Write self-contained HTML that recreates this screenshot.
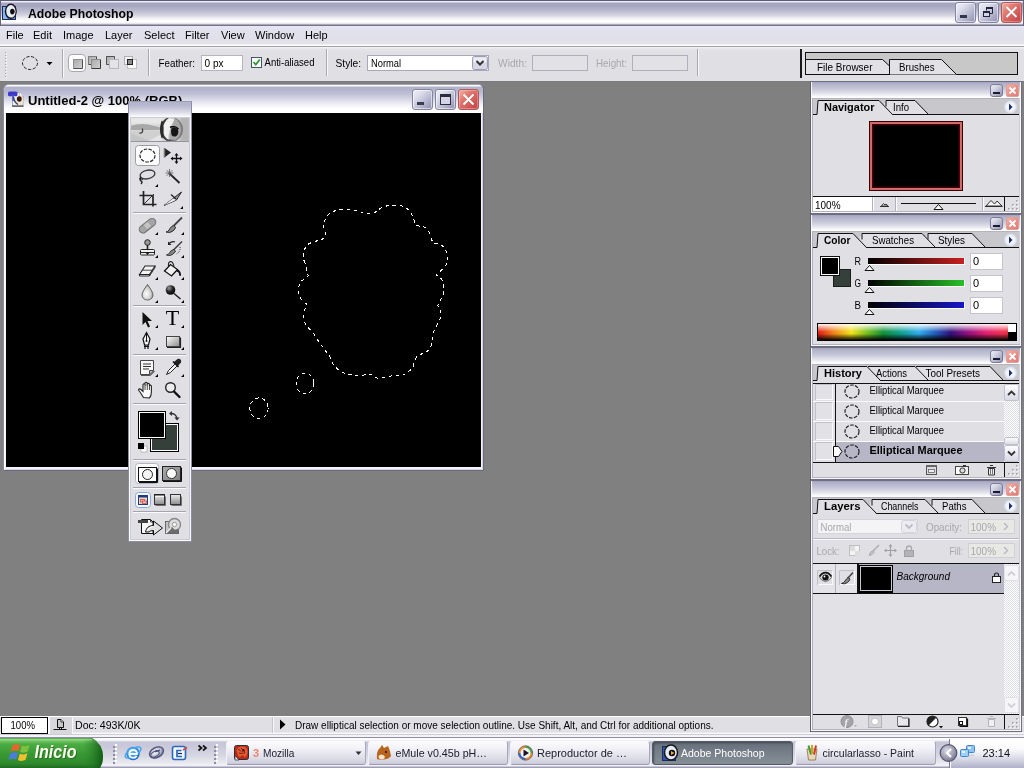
<!DOCTYPE html>
<html>
<head>
<meta charset="utf-8">
<title>Adobe Photoshop</title>
<style>
*{box-sizing:border-box;margin:0;padding:0}
html,body{width:1024px;height:768px;overflow:hidden;background:#808080}
body{position:relative;font-family:"Liberation Sans","DejaVu Sans",sans-serif;font-size:11px;color:#000;line-height:1}
.abs{position:absolute}
svg{position:absolute;overflow:visible;will-change:transform}
svg text{font-family:"Liberation Sans","DejaVu Sans",sans-serif}
.t{position:absolute;white-space:nowrap;will-change:transform}
/* main title bar */
#title{left:0;top:0;width:1024px;height:26px;background:linear-gradient(#5c5c74 0,#5c5c74 1px,#ececfa 1px,#ececfa 2px,#a4a4bc 3px,#aaaac2 7px,#bcbcd0 11px,#d2d2e0 15px,#eeeef4 18px,#ffffff 21px,#ffffff 22px,#dcdce4 24px,#74748a 25px,#74748a 26px)}
#title .t{left:28px;top:6px;font-size:13px;font-weight:bold;letter-spacing:0.2px}
#menu{left:0;top:26px;width:1024px;height:21px;background:linear-gradient(#e6e6f6 0,#e2e2ee 4px,#e0e0ea 14px,#e2e2e6 18px,#ffffff 19px,#ffffff 20px,#a0a0a8 20px,#a0a0a8 21px)}
#menu .t{top:4px;font-size:11px}
#opt{left:0;top:47px;width:1024px;height:34px;background:linear-gradient(#f6f6f8 0,#e4e3e8 2px,#e0dfe4 6px,#e0dfe4 30px,#e2e2e6 34px);box-shadow:0 1px 0 #7a7a7c}
.cap{background:linear-gradient(#9c9cb6 0,#b0b0c8 2px,#c6c6d8 6px,#e4e4ee 10px,#fbfbfd 13px,#fff 100%)}
.btn{border-radius:3px;border:1px solid #8484a0;background:linear-gradient(135deg,#f0f0fa 0,#dcdcec 30%,#b0b0ca 70%,#9090b0 100%);box-shadow:inset 0 0 0 1px rgba(255,255,255,.55)}
.btn.x{border-color:#b05858;background:linear-gradient(135deg,#f4b4a8 0,#e07870 35%,#cc5050 80%,#c04444 100%);box-shadow:inset 0 0 0 1px rgba(255,220,220,.35)}
.fld{background:#fff;border:1px solid #8e8f9e;border-right-color:#d8d8e0;border-bottom-color:#d8d8e0}
.sepv{width:2px;background:linear-gradient(90deg,#9c9ca4 0,#9c9ca4 1px,#fff 1px,#fff 2px)}
.seph{height:2px;background:linear-gradient(#9c9ca4 0,#9c9ca4 1px,#fff 1px,#fff 2px)}
</style>
</head>
<body>
<!-- ===== main title bar ===== -->
<div id="title" class="abs"></div>
<svg style="left:0;top:0" width="200" height="26" viewBox="0 0 200 26"><text x="28" y="17.500" font-size="13.500" font-weight="bold" textLength="105.500" lengthAdjust="spacingAndGlyphs">Adobe Photoshop</text>
<rect x="2.500" y="6.500" width="13" height="13" fill="#6c98d8" stroke="#1c2c58"/><rect x="3" y="7" width="4" height="12" fill="#88b4ec"/>
<ellipse cx="10.800" cy="11.300" rx="5.300" ry="7" fill="#e4f0f0" stroke="#14142c" stroke-width="1.500"/><path d="M10 5q5 1 5.500 6.500q0 5-4 6.500q3-6-1.500-13z" fill="#f4e8e8"/>
<ellipse cx="12.300" cy="11.600" rx="2.200" ry="2.800" fill="#0c0c14"/><path d="M11.500 9.500l3.500 2.200-3.500 2.200z" fill="#181010"/>
<rect x="0" y="1" width="1" height="25" fill="#64647e"/></svg>
<!-- main window buttons -->
<div class="abs btn" style="left:955px;top:2px;width:21px;height:21px"></div>
<div class="abs btn" style="left:978px;top:2px;width:21px;height:21px"></div>
<div class="abs btn x" style="left:1001px;top:2px;width:21px;height:21px"></div>
<svg style="left:955px;top:2px" width="69" height="24" viewBox="955 2 69 24">
 <rect x="960" y="15" width="7" height="3" fill="#34344c"/>
 <path d="M986.500 10.500v-3h6v6h-2.500" fill="none" stroke="#24243c" stroke-width="1"/><rect x="986" y="7" width="7" height="2" fill="#24243c"/>
 <rect x="983.500" y="11.500" width="6" height="5" fill="#d4d4e4" stroke="#24243c"/><rect x="983" y="11" width="7" height="2" fill="#24243c"/>
 <path d="M1006.500 7l10 10M1016.500 7l-10 10" stroke="#fff" stroke-width="1.900"/>
 <rect x="1023" y="1" width="1" height="25" fill="#64647e"/>
</svg>
<!-- ===== menu bar ===== -->
<div id="menu" class="abs">
<div class="t" style="left:6px">File</div>
<div class="t" style="left:33px">Edit</div>
<div class="t" style="left:63px">Image</div>
<div class="t" style="left:105px">Layer</div>
<div class="t" style="left:144px">Select</div>
<div class="t" style="left:185px">Filter</div>
<div class="t" style="left:221px">View</div>
<div class="t" style="left:255px">Window</div>
<div class="t" style="left:305px">Help</div>
</div>
<!-- ===== options bar ===== -->
<div id="opt" class="abs"></div>
<!-- options bar content -->
<svg class="abs" style="left:0;top:47px" width="1024" height="35" viewBox="0 47 1024 35">
 <!-- gripper -->
 <g fill="#a4a4b0"><rect x="5" y="52" width="1" height="1"/><rect x="5" y="55" width="1" height="1"/><rect x="5" y="58" width="1" height="1"/><rect x="5" y="61" width="1" height="1"/><rect x="5" y="64" width="1" height="1"/><rect x="5" y="67" width="1" height="1"/><rect x="5" y="70" width="1" height="1"/><rect x="5" y="73" width="1" height="1"/><rect x="5" y="76" width="1" height="1"/></g>
 <g fill="#fff"><rect x="6" y="53" width="1" height="1"/><rect x="6" y="56" width="1" height="1"/><rect x="6" y="59" width="1" height="1"/><rect x="6" y="62" width="1" height="1"/><rect x="6" y="65" width="1" height="1"/><rect x="6" y="68" width="1" height="1"/><rect x="6" y="71" width="1" height="1"/><rect x="6" y="74" width="1" height="1"/><rect x="6" y="77" width="1" height="1"/></g>
 <!-- ellipse marquee icon -->
 <ellipse cx="30" cy="63" rx="7.5" ry="6.5" fill="none" stroke="#222" stroke-width="1" stroke-dasharray="3.2 1.6"/>
 <path d="M46.5 62h6l-3 3.2z" fill="#000"/>
 <!-- mode buttons -->
 <linearGradient id="mbg" x1="0" y1="0" x2="1" y2="1"><stop offset="0" stop-color="#a8a8a8"/><stop offset="1" stop-color="#d4d4d4"/></linearGradient>
 <rect x="68.500" y="54.500" width="17" height="17" rx="3.500" fill="#fdfdfd" stroke="#a8a8b4"/>
 <rect x="73" y="59" width="10" height="10" fill="url(#mbg)"/><path d="M73.500 68.500h9v-9" fill="none" stroke="#505050"/><path d="M73.500 68v-8.500h8.500" fill="none" stroke="#909090"/>
 <rect x="88" y="56" width="9" height="9" fill="url(#mbg)"/><path d="M88.500 64.500h8v-8" fill="none" stroke="#484848"/><path d="M88.500 64v-7.500h7.500" fill="none" stroke="#7c7c7c"/>
 <rect x="91" y="59" width="10" height="10" fill="url(#mbg)"/><path d="M91.500 68.500h9v-9" fill="none" stroke="#383838"/><path d="M91.500 68v-8.500h8.500" fill="none" stroke="#8c8c8c"/>
 <rect x="106" y="56" width="9" height="9" fill="url(#mbg)"/><path d="M106.500 64.500v-8h8v8" fill="none" stroke="#505050"/><path d="M106.500 64.500h8" stroke="#505050"/>
 <rect x="109.500" y="59.500" width="9" height="9" fill="#e4e4e8" stroke="#b8b8bc"/>
 <rect x="124.500" y="56.500" width="8" height="8" fill="#f4f4f4" stroke="#b0b0b4"/>
 <rect x="127.500" y="59.500" width="9" height="9" fill="#fafafa" stroke="#c0c0c4"/>
 <rect x="127.500" y="59.500" width="5" height="5" fill="#8c8c8c" stroke="#222"/>
 <!-- separators -->
 <rect x="62" y="49" width="1" height="29" fill="#a8a8b0"/><rect x="63" y="49" width="1" height="29" fill="#f8f8fa"/>
 <rect x="148" y="49" width="1" height="27" fill="#a8a8b0"/><rect x="149" y="49" width="1" height="27" fill="#f8f8fa"/>
 <rect x="326" y="49" width="1" height="27" fill="#a8a8b0"/><rect x="327" y="49" width="1" height="27" fill="#f8f8fa"/>
 <rect x="697" y="49" width="1" height="27" fill="#a8a8b0"/><rect x="698" y="49" width="1" height="27" fill="#f8f8fa"/>
 <!-- feather -->
 <text x="158.500" y="67" font-size="11" textLength="36.5" lengthAdjust="spacingAndGlyphs">Feather:</text>
 <rect x="201.500" y="55.500" width="41" height="15" fill="#fff" stroke="#b4b4c4"/>
 <text x="204.500" y="67" font-size="11" textLength="19" lengthAdjust="spacingAndGlyphs">0 px</text>
 <!-- anti-aliased -->
 <rect x="251.500" y="57.500" width="10" height="10" fill="#fff" stroke="#44546c"/>
 <path d="M253.500 62l2.300 2.500 4-5" fill="none" stroke="#2a9a2a" stroke-width="1.800"/>
 <text x="264.500" y="66" font-size="11" textLength="50" lengthAdjust="spacingAndGlyphs">Anti-aliased</text>
 <!-- style -->
 <text x="335.500" y="67" font-size="11" textLength="25.5" lengthAdjust="spacingAndGlyphs">Style:</text>
 <rect x="367.500" y="55.500" width="121" height="15" fill="#fff" stroke="#a8a8bc"/>
 <text x="371" y="67" font-size="11" textLength="30" lengthAdjust="spacingAndGlyphs">Normal</text>
 <rect x="472.500" y="56.500" width="15" height="13" rx="2" fill="#d8d8e4" stroke="#9c9cb4"/>
 <rect x="473.500" y="57.500" width="13" height="5" fill="#f0f0f8" opacity=".8"/>
 <path d="M476.500 61l3.500 3.500 3.500-3.500" fill="none" stroke="#333" stroke-width="2"/>
 <!-- width/height (disabled) -->
 <text x="498" y="67" font-size="11" textLength="29" lengthAdjust="spacingAndGlyphs" fill="#a8a8ac">Width:</text>
 <rect x="532.500" y="55.500" width="55" height="15" fill="#e2e1e6" stroke="#b0b0bc"/>
 <text x="596" y="67" font-size="11" textLength="31" lengthAdjust="spacingAndGlyphs" fill="#a8a8ac">Height:</text>
 <rect x="632.500" y="55.500" width="55" height="15" fill="#e2e1e6" stroke="#b0b0bc"/>
 <!-- palette well -->
 <rect x="800" y="49" width="2" height="29" fill="#1a1a1a"/>
 <rect x="805.500" y="52.500" width="212" height="22" fill="#c8c8c8" stroke="#111"/>
 <path d="M806 59.500h76.500l7 6.500v8h-83.500z" fill="#e2e1e6"/>
 <path d="M806 59.500h76.500l7 6.500" fill="none" stroke="#111"/>
 <path d="M889.500 59.500v15" stroke="#111"/>
 <path d="M890 59.500h51.500l15 15h-66.500z" fill="#e2e1e6"/>
 <path d="M889.500 59.500h52l15 15" fill="none" stroke="#111"/>
 <text x="817" y="70.500" font-size="11" textLength="55.5" lengthAdjust="spacingAndGlyphs">File Browser</text>
 <text x="899" y="70.500" font-size="11" textLength="35.5" lengthAdjust="spacingAndGlyphs">Brushes</text>
</svg>
<!--OPTIONS-END-->
<!-- document window -->
<div class="abs" id="doc" style="left:3px;top:84px;width:481px;height:387px;border-radius:6px 6px 0 0;background:#f4f4fa;border:1px solid #8c8ca6;border-top-color:#a0a0b8;border-right-color:#6a6a7e;border-bottom-color:#6a6a7e;box-shadow:inset 1px 0 0 #fff,inset -1px 0 0 #d4d4e4,inset 0 -1px 0 #d4d4e4"></div>
<div class="abs" style="left:4px;top:85px;width:479px;height:28px;border-radius:5px 5px 0 0;background:linear-gradient(#fdfdff 0,#fdfdff 1px,#b2b2ca 2px,#b4b4cc 5px,#c4c4d8 10px,#dcdce8 15px,#f2f2f8 20px,#ffffff 24px,#ffffff 28px)"></div>
<div class="abs" style="left:6px;top:113px;width:475px;height:354px;background:#000"></div>
<div class="t" id="doctitle" style="left:27.500px;top:93.500px;font-size:13px;font-weight:bold;transform-origin:0 0">Untitled-2 @ 100% (RGB)</div>
<!-- doc icon -->
<svg style="left:8px;top:89px" width="17" height="19" viewBox="8 89 17 19">
 <path d="M12.500 92.500h7l3.500 3.500v10h-10.500z" fill="#f0f0f6" stroke="#9c9ca8" stroke-width=".8"/>
 <path d="M19.500 92.500v3.500h3.500" fill="#fff" stroke="#b0b0b8" stroke-width=".6"/>
 <rect x="8" y="91.500" width="9.500" height="4.800" rx="1.500" fill="#3c3ccc"/><rect x="12" y="95" width="2" height="6" fill="#5858c8" opacity=".8"/>
 <ellipse cx="19.300" cy="100.500" rx="4" ry="4.800" fill="#f0e4cc"/>
 <ellipse cx="19.300" cy="99" rx="2.400" ry="2.800" fill="#38180c"/>
 <path d="M13.500 97q.5 5 4.500 7.500" fill="none" stroke="#24447c" stroke-width="1.400"/>
 <rect x="12" y="105.500" width="11.500" height="1.200" fill="#3c3c34"/>
</svg>
<!-- doc buttons -->
<div class="abs btn" style="left:412px;top:89px;width:21px;height:21px"></div>
<div class="abs btn" style="left:435px;top:89px;width:21px;height:21px"></div>
<div class="abs btn x" style="left:458px;top:89px;width:21px;height:21px"></div>
<svg style="left:412px;top:89px" width="67" height="21" viewBox="412 89 67 21">
 <rect x="417" y="102" width="7" height="3" fill="#3c3c50"/>
 <rect x="440.500" y="94.500" width="10" height="10" fill="#d4d4e4" stroke="#2c2c40"/><rect x="440" y="94" width="11" height="3" fill="#2c2c40"/>
 <path d="M463.500 94.500l10 10M473.500 94.500l-10 10" stroke="#fff" stroke-width="1.900"/>
</svg>
<!-- selection (marching ants) -->
<svg style="left:6px;top:113px" width="475" height="354" viewBox="6 113 475 354">
 <g fill="none" stroke="#fff" stroke-width="1" stroke-dasharray="3.500 3.500" shape-rendering="crispEdges">
 <path d="M323.9 222.0C325.1 219.8 325.9 217.1 327.6 215.3C329.2 213.5 331.5 212.3 333.8 211.3C336.0 210.4 338.5 209.9 341.2 209.6C343.9 209.3 347.0 209.4 349.9 209.6C352.8 209.8 356.3 210.2 358.5 210.8C360.8 211.5 361.1 212.8 363.5 213.3C365.9 213.9 369.7 213.8 372.9 214.1C375.1 212.3 377.2 210.2 379.6 208.9C381.9 207.5 384.5 206.5 387.0 205.9C389.5 205.3 391.7 205.3 394.4 205.4C397.1 205.5 400.6 205.5 403.1 206.4C405.5 207.3 407.6 209.1 409.3 210.8C410.9 212.6 411.9 214.6 413.0 217.0C414.1 219.5 414.9 222.8 415.9 225.7C418.7 226.1 421.9 225.9 424.1 226.9C426.3 228.0 427.8 229.8 429.1 231.9C430.3 233.9 430.8 237.5 431.5 239.3C432.2 241.2 432.7 241.8 433.3 243.0C435.6 243.4 438.2 243.2 440.2 244.3C442.2 245.3 443.9 247.1 445.1 249.2C446.4 251.3 447.4 254.2 447.6 256.6C447.8 259.1 447.4 261.8 446.4 264.1C445.3 266.3 443.2 268.4 441.4 270.2C439.7 272.1 437.8 273.5 436.0 275.2C437.8 276.4 440.1 277.0 441.4 278.9C442.7 280.8 443.6 283.8 443.9 286.3C444.2 288.8 444.0 291.5 443.4 293.7C442.8 296.0 441.4 298.0 440.4 299.9C439.5 301.9 438.6 303.6 437.7 305.4C438.5 307.3 439.8 308.9 440.2 311.1C440.6 313.3 440.7 316.2 440.2 318.5C439.7 320.8 438.0 322.6 437.0 324.7C435.9 326.7 434.7 328.6 434.0 330.9C433.3 333.1 433.2 336.0 432.8 338.3C432.4 340.6 432.4 342.4 431.5 344.5C430.7 346.5 429.5 349.1 427.8 350.7C426.2 352.2 423.5 352.9 421.6 353.9C419.8 354.9 418.3 355.9 416.7 356.9C415.9 358.5 414.8 360.1 414.2 361.8C413.6 363.5 414.2 365.4 413.0 367.2C411.7 369.1 408.7 371.5 406.8 372.9C404.8 374.4 403.2 374.9 401.3 375.9C398.2 375.9 394.9 375.6 391.9 375.9C388.9 376.2 385.8 377.6 383.3 377.9C380.7 378.2 378.3 378.4 376.6 377.9C374.9 377.4 374.1 375.9 372.9 374.9C371.0 374.8 369.6 374.6 367.2 374.7C364.8 374.8 361.4 375.4 358.5 375.4C355.6 375.4 352.8 375.3 349.9 374.7C347.0 374.0 343.5 372.8 341.2 371.7C338.9 370.6 337.7 369.4 336.3 368.0C334.8 366.5 333.6 364.9 332.5 363.0C331.5 361.2 331.1 358.7 330.1 356.9C329.0 355.0 327.6 353.6 326.4 351.9C325.1 350.3 323.9 348.6 322.6 347.0C321.4 345.3 320.2 343.9 318.9 342.0C317.7 340.1 316.5 337.7 315.2 335.8C314.0 334.0 313.0 332.5 311.5 330.9C310.1 329.2 307.8 327.8 306.6 325.9C305.3 324.1 304.6 321.6 304.1 319.7C303.5 317.9 303.1 316.6 303.3 314.8C303.5 312.9 304.7 310.4 305.3 308.6C305.9 306.8 306.5 305.6 307.1 304.1C305.7 303.2 304.2 302.7 302.8 301.2C301.5 299.6 299.9 297.0 299.1 295.0C298.4 292.9 298.2 290.9 298.4 288.8C298.6 286.7 299.4 284.3 300.4 282.6C301.3 281.0 302.8 280.1 304.1 278.9C305.4 277.7 306.9 276.8 308.3 275.7C307.7 273.9 307.1 272.2 306.6 270.2C306.1 268.3 305.9 266.1 305.3 264.1C304.8 262.0 303.5 259.9 303.3 257.9C303.1 255.8 303.5 253.7 304.1 251.7C304.6 249.6 305.3 247.0 306.6 245.5C307.8 244.0 309.9 243.3 311.5 242.5C313.2 241.8 314.8 241.4 316.5 241.0C318.1 240.7 319.8 240.5 321.4 240.3C322.8 238.7 325.1 237.2 325.6 235.6C326.2 234.0 325.0 232.3 324.6 230.6C324.2 229.0 323.3 227.1 323.1 225.7C323.0 224.3 323.6 223.2 323.9 222.0Z"/>
 <ellipse cx="305" cy="383.400" rx="8.900" ry="10.400"/>
 <ellipse cx="259" cy="408.300" rx="9.100" ry="10.400"/>
 </g>
</svg>
<!--DOCWIN-END-->
<!-- toolbox -->
<div class="abs" style="left:128px;top:101px;width:64px;height:441px;background:#e0dfe4;border:1px solid #8c8ca4;border-top-color:#9c9cb4;box-shadow:inset 1px 0 0 #fff,inset -1px 0 0 #f4f4fa,inset 0 -1px 0 #fafafe"></div>
<div class="abs" style="left:129px;top:102px;width:62px;height:15px;background:linear-gradient(#b4b4cc 0,#b6b6ce 3px,#c8c8da 7px,#e0e0ea 11px,#f6f6fa 14px,#fff 15px)"></div>
<svg style="left:128px;top:101px" width="64" height="441" viewBox="128 101 64 441">
 <defs>
  <linearGradient id="eyeg" x1="0" y1="0" x2="1" y2="0"><stop offset="0" stop-color="#d8d8d8"/><stop offset=".45" stop-color="#e8e8e8"/><stop offset=".7" stop-color="#c8c8c8"/><stop offset="1" stop-color="#b0b0b0"/></linearGradient>
  <linearGradient id="eyeg2" x1="0" y1="0" x2="0" y2="1"><stop offset="0" stop-color="#fff" stop-opacity=".5"/><stop offset=".45" stop-color="#888" stop-opacity=".35"/><stop offset=".6" stop-color="#fff" stop-opacity=".1"/><stop offset="1" stop-color="#999" stop-opacity=".3"/></linearGradient>
  <linearGradient id="gr1" x1="0" y1="0" x2="1" y2="1"><stop offset="0" stop-color="#fff"/><stop offset="1" stop-color="#8c8c8c"/></linearGradient>
  <linearGradient id="gr3" x1="0" y1="0" x2="0" y2="1"><stop offset="0" stop-color="#ececec"/><stop offset="1" stop-color="#8c8c8c"/></linearGradient>
  <linearGradient id="gr2" x1="0" y1="0" x2="0" y2="1"><stop offset="0" stop-color="#f4f4f4"/><stop offset="1" stop-color="#6c6c6c"/></linearGradient>
  <radialGradient id="ball" cx=".35" cy=".3" r=".8"><stop offset="0" stop-color="#999"/><stop offset=".5" stop-color="#222"/><stop offset="1" stop-color="#000"/></radialGradient>
  <radialGradient id="drop" cx=".4" cy=".6" r=".7"><stop offset="0" stop-color="#fff"/><stop offset=".6" stop-color="#ccc"/><stop offset="1" stop-color="#777"/></radialGradient>
 </defs>
 <!-- eye banner -->
 <filter id="bl1" x="-10%" y="-10%" width="120%" height="120%"><feGaussianBlur stdDeviation=".7"/></filter>
 <filter id="bl2" x="-10%" y="-10%" width="120%" height="120%"><feGaussianBlur stdDeviation="1.6"/></filter>
 <linearGradient id="ringg" x1="0" y1="0" x2="1" y2="0"><stop offset="0" stop-color="#2c2c2c"/><stop offset=".35" stop-color="#4c4c4c"/><stop offset=".7" stop-color="#8c8c8c"/><stop offset="1" stop-color="#7c7c7c"/></linearGradient>
 <clipPath id="bannerclip"><rect x="130" y="117" width="60" height="25"/></clipPath>
 <g clip-path="url(#bannerclip)">
 <rect x="130" y="117" width="60" height="25" fill="#d6d6d6"/>
 <rect x="130" y="117" width="34" height="7" fill="#e8e8e8" filter="url(#bl2)"/>
 <path d="M130 126q10-3 18-1.500t14 3.500v2h-32z" fill="#a8a8a8" filter="url(#bl1)"/>
 <path d="M131 129.500h30" stroke="#6c6c6c" stroke-width="1.300" filter="url(#bl1)"/>
 <path d="M130 131h32v10h-32z" fill="#d0d0d0"/>
 <path d="M148 141l14-7v7z" fill="#e4e4e4" filter="url(#bl1)"/><path d="M130 133l20 8h-20z" fill="#c4c4c4" filter="url(#bl1)"/>
 <path d="M142.500 128.500v3.500q-1 1.500-3 1" stroke="#3c3c3c" stroke-width="1.300" fill="none"/>
 <rect x="180" y="117" width="10" height="25" fill="#b4b4b4" filter="url(#bl2)"/>
 <ellipse cx="171.500" cy="129.500" rx="10.300" ry="11.300" fill="#c4c4c4" stroke="url(#ringg)" stroke-width="2.400"/>
 <path d="M163 129q1-8 6-11l6 .500q-4 6-5.500 12t-1 9.500q-5-3-5.500-11z" fill="#f0f0f0" filter="url(#bl1)"/>
 <path d="M175 118.500q5 3 6 11q-1 8-6 10.500q-4-1-5.500-1.500q0-8 5.500-20z" fill="#a8a8a8" filter="url(#bl1)"/>
 <path d="M171.500 128q3-2 6.500 1.500q1 4-1.500 6.500q-3 1.500-5-1q-1-4 0-7z" fill="#141414" filter="url(#bl1)"/>
 <path d="M170 127.500q4-2.500 8.500 1.500" stroke="#111" stroke-width="1.600" fill="none" filter="url(#bl1)"/>
 <ellipse cx="162" cy="129.500" rx="1.600" ry="9" fill="#2a2a2a" filter="url(#bl1)"/>
 </g>
 <rect x="130" y="117" width="60" height="1" fill="#94949c"/><rect x="130" y="141" width="60" height="1" fill="#94949c"/>
 <!-- separators -->
 <g fill="#a4a4b0"><rect x="133" y="212" width="53" height="1"/><rect x="133" y="305" width="53" height="1"/><rect x="133" y="354" width="53" height="1"/><rect x="133" y="403" width="53" height="1"/><rect x="133" y="459" width="53" height="1"/><rect x="133" y="487" width="53" height="1"/><rect x="133" y="511" width="53" height="1"/></g>
 <g fill="#fbfbfd"><rect x="133" y="213" width="53" height="1"/><rect x="133" y="306" width="53" height="1"/><rect x="133" y="355" width="53" height="1"/><rect x="133" y="404" width="53" height="1"/><rect x="133" y="460" width="53" height="1"/><rect x="133" y="488" width="53" height="1"/><rect x="133" y="512" width="53" height="1"/></g>
 <!-- corner triangles -->
 <g fill="#000">
  <path d="M159 163v-3l-3 3z"/>
  <path d="M158 187v-3l-3 3zM183 209v-3l-3 3z"/>
  <path d="M158 235v-3l-3 3zM184 235v-3l-3 3zM158 258v-3l-3 3zM184 258v-3l-3 3zM158 280v-3l-3 3zM184 280v-3l-3 3zM158 303v-3l-3 3zM184 303v-3l-3 3z"/>
  <path d="M158 328v-3l-3 3zM184 328v-3l-3 3zM158 350v-3l-3 3zM184 350v-3l-3 3z"/>
  <path d="M158 377v-3l-3 3zM184 377v-3l-3 3z"/>
 </g>
 <!-- row 1: marquee (selected) + move -->
 <rect x="135.500" y="145.500" width="24" height="20" rx="3" fill="#fcfcfc" stroke="#9c9ca8"/>
 <ellipse cx="147.500" cy="155.500" rx="7.500" ry="6.500" fill="none" stroke="#222" stroke-width="1.200" stroke-dasharray="3.400 1.400"/>
 <path d="M164.500 148v9.500l6.500-5z" fill="#222"/><path d="M164.500 148v9.500" stroke="#777" stroke-width="1.500"/>
 <path d="M176.500 154.500v8M172 158.500h9" stroke="#111" stroke-width="1.300"/><path d="M176.500 153l-2 2.500h4zM176.500 164l-2-2.500h4zM170.500 158.500l2.500-2v4zM182.500 158.500l-2.500-2v4z" fill="#111"/>
 <!-- row 2: lasso + wand -->
 <ellipse cx="147.500" cy="174.500" rx="7.500" ry="4.300" fill="none" stroke="#333" stroke-width="1.300" transform="rotate(-12 147.500 174.500)"/>
 <path d="M141 177q-2 2 0 4q2 1 0 3" stroke="#222" stroke-width="1.400" fill="none"/><path d="M139.500 178.500l3.500 1" stroke="#222" stroke-width="1"/>
 <path d="M169 173l10.500 10" stroke="#222" stroke-width="1.800"/><path d="M169.500 169v8M165.500 173h8M166.700 170.200l5.600 5.600M172.300 170.200l-5.600 5.600" stroke="#555" stroke-width=".8"/>
 <!-- row 3: crop + slice -->
 <path d="M143.500 191v13.500h13M139.500 195.500h13.500v11" stroke="#222" stroke-width="1.700" fill="none"/><path d="M144 204l10-10" stroke="#333" stroke-width="1"/>
 <path d="M164 205.500l9-7 8.500-6.500-5 8z" fill="#999" stroke="#222" stroke-width="1"/><path d="M171 194.500l5 4.500" stroke="#222" stroke-width="1.300"/><path d="M164 205.500l9-7 3 1.500z" fill="#eee"/>
 <!-- group 2 row 1: healing + brush -->
 <rect x="138" y="222" width="19" height="7.500" rx="3.700" fill="#a4a4a4" stroke="#707070" transform="rotate(-38 147.500 225.700)"/>
 <rect x="144.500" y="222.500" width="6" height="6" fill="#c4c4c4" stroke="#8c8c8c" stroke-width=".6" transform="rotate(-38 147.500 225.700)"/>
 <path d="M182 217.500l-9 9" stroke="#444" stroke-width="1.800"/><path d="M173.500 225.500q-3 1-4.500 4.500q-1.500 2-3 2q4 1.500 7-1q2.500-2 2.500-4z" fill="#888" stroke="#222" stroke-width=".9"/>
 <!-- row 2: stamp + history brush -->
 <circle cx="147.500" cy="242.500" r="2.800" fill="#999" stroke="#222"/><path d="M147.500 245v4" stroke="#222" stroke-width="1.600"/>
 <rect x="140.500" y="249.500" width="14" height="5.500" rx="1" fill="#f0f0f0" stroke="#222"/><path d="M140.500 252.500h14" stroke="#222"/><path d="M145.500 252.500h4l-2 2.500z" fill="#111"/>
 <path d="M182 241.500l-9 9" stroke="#444" stroke-width="1.600"/><path d="M173.500 249.500q-3 1-4 3.500q-1.500 2-3 2q4 1.500 6.500-1q2.500-2 2.500-3z" fill="#888" stroke="#222" stroke-width=".9"/>
 <path d="M169 243.500q3-2.500 6-1.500" stroke="#222" stroke-width="1.200" fill="none"/><path d="M168 241.500v3.500h3.500z" fill="#222"/>
 <path d="M180 247q1 4-3.500 7" stroke="#222" stroke-width="1" stroke-dasharray="1 1" fill="none"/>
 <!-- row 3: eraser + bucket -->
 <path d="M139.500 274.500l5.500-8.500h10l-5.500 8.500z" fill="#f4f4f4" stroke="#222" stroke-width="1.100"/><path d="M139.500 274.500v1.500h10v-1.500M149.500 276l5.500-8.500v-1.500" fill="none" stroke="#222" stroke-width=".9"/><path d="M142.300 270.200h10" stroke="#222" stroke-width=".8"/>
 <path d="M164.500 271l6-6.500 7 5-6 6.500z" fill="#f0f0f0" stroke="#111" stroke-width="1.300"/><path d="M168.500 266q-.5-4 2-4.500q2.500 0 3.500 5" fill="none" stroke="#222" stroke-width="1.100"/>
 <path d="M177.500 269.500q3.500 1 3.500 6q-1 1-2-.5q.5-3-2.500-3.500z" fill="#111"/>
 <!-- row 4: blur + dodge -->
 <path d="M147.500 284.500q5.500 7.500 5.500 10.500a5.500 5 0 0 1-11 0q0-3 5.500-10.500z" fill="url(#drop)" stroke="#555" stroke-width=".9"/>
 <circle cx="170.500" cy="290" r="4.800" fill="url(#ball)"/><path d="M174 293.500l6.500 5.500" stroke="#222" stroke-width="1.600"/>
 <!-- group 3: path select + T -->
 <path d="M142.500 312v13l3-3 2.500 5.500 2-1-2.500-5.500h4.500z" fill="#111"/>
 <text x="165.800" y="324.500" font-size="20" style="font-family:'Liberation Serif',serif" textLength="13.500" lengthAdjust="spacingAndGlyphs">T</text>
 <!-- pen + shape -->
 <path d="M146.500 332.500l3.500 6.500-1.500 6h-4l-1.500-6z" fill="#f4f4f4" stroke="#111" stroke-width="1.200"/><path d="M146.500 334v7" stroke="#111"/><circle cx="146.500" cy="341" r="1" fill="#111"/><path d="M144 346.500h5M145 345v4M148 345v4" stroke="#111" stroke-width="1.200"/>
 <rect x="166.500" y="336.500" width="13" height="10" fill="url(#gr1)" stroke="#444"/><path d="M167 347.500h13.500v-10" fill="none" stroke="#222" stroke-width="1.200"/>
 <!-- group 4: notes + eyedropper -->
 <path d="M140.500 360.500h13v10l-4 4h-9z" fill="#f8f8f8" stroke="#444"/><path d="M153.500 370.500h-4v4" fill="#bbb" stroke="#444"/><path d="M143 364h8M143 366.500h8M143 369h6" stroke="#333" stroke-width="1"/><path d="M141 375.500h9l4.500-4.500" stroke="#555" stroke-width="1.200" fill="none"/>
 <path d="M166.500 374.500l2-4 7-7 2 2-7 7z" fill="#f4f4f4" stroke="#222" stroke-width="1"/><path d="M174 362l3.500-3q2-.5 3 .5t.5 3l-3 3.500z" fill="#222"/><path d="M173 361.500l5.500 5.500" stroke="#111" stroke-width="1.600"/>
 <!-- hand + zoom -->
 <path d="M143.500 397.500q-3-5-5-7.500q.5-2 2.500-.5l2 2v-7q1-1.500 2 0v-1.500q1-1.500 2.200 0v1q1.200-1.300 2.200 0v1.500q1.300-1 2 .5v6q0 4-2 6z" fill="#fafafa" stroke="#222" stroke-width="1.100"/><path d="M145 385v5M147.300 384v6M149.500 385v5" stroke="#222" stroke-width=".8"/>
 <circle cx="170.500" cy="387.500" r="4.800" fill="#ececec" stroke="#222" stroke-width="1.400"/><path d="M174 391.500l5.500 5.500" stroke="#111" stroke-width="2.400" stroke-linecap="round"/>
 <!-- colour swatches -->
 <rect x="150.500" y="423.500" width="28" height="28" fill="#fff" stroke="#000"/><rect x="152" y="425" width="25" height="25" fill="#35403a"/>
 <rect x="138.500" y="411.500" width="27" height="27" fill="#fff" stroke="#000"/><rect x="140" y="413" width="24" height="24" fill="#000"/>
 <rect x="141" y="446" width="6" height="6" fill="#fff" stroke="#999" stroke-width=".6"/><rect x="138" y="443" width="6" height="6" fill="#000"/>
 <path d="M171 413.500q5 0 6 5" stroke="#333" stroke-width="1.400" fill="none"/><path d="M169 413.500l3-2.500v5zM177 420.500l-2.700-3h5.400z" fill="#333"/>
 <!-- mask mode buttons -->
 <rect x="135.500" y="463.500" width="23" height="20" rx="3" fill="#fdfdfd" stroke="#b4b4c0"/>
 <rect x="138.500" y="467.500" width="18" height="14" fill="#fff" stroke="#111"/><path d="M139 482.500h18.500v-14" stroke="#111" fill="none"/><circle cx="147.500" cy="474.500" r="5" fill="#f4f4f4" stroke="#222"/>
 <rect x="162.500" y="466.500" width="18" height="14" fill="url(#gr1)" stroke="#222"/><rect x="163" y="467" width="17" height="13" fill="#777" opacity=".6"/><path d="M163 481.500h18.500v-14" stroke="#111" fill="none"/><circle cx="171.500" cy="473.500" r="5" fill="#fafafa" stroke="#333"/>
 <!-- screen modes -->
 <rect x="135.500" y="492.500" width="15" height="15" rx="3" fill="#f4f8ff" stroke="#88a8d8"/>
 <rect x="138.500" y="495.500" width="9" height="9" fill="#e8d0d0" stroke="#1c3c7c"/><rect x="138" y="495" width="10" height="2.500" fill="#1c3c7c"/><rect x="140.500" y="499.500" width="4" height="2.500" fill="#f0c0b0" stroke="#d05040" stroke-width=".8"/><rect x="142.500" y="501" width="4" height="2.500" fill="#f0c0b0" stroke="#d05040" stroke-width=".8"/>
 <rect x="154.500" y="494.500" width="10" height="10" fill="url(#gr3)" stroke="#333"/><rect x="155" y="495" width="9" height="2" fill="#f4f4f4"/><rect x="154" y="494" width="11" height="1.500" fill="#222"/><path d="M155.500 505.500h10v-9" stroke="#555" fill="none" stroke-width=".8"/>
 <rect x="170.500" y="494.500" width="10" height="10" fill="url(#gr3)" stroke="#333"/><path d="M171.500 505.500h10v-9" stroke="#555" fill="none" stroke-width=".8"/>
 <!-- jump to -->
 <path d="M141.500 519.500h9l2.500 2.500v11.500h-11.500z" fill="#f8f8f8" stroke="#111"/><path d="M150.500 519.500v2.500h2.500" fill="none" stroke="#111" stroke-width=".8"/><rect x="138" y="520" width="10" height="3" fill="#444"/>
 <path d="M145.500 532q1-6.500 8-6.500v-4.500l9 7-9 7v-4.500q-3.500 0-4.500 1.500z" fill="#e0e0e0" stroke="#111"/><path d="M147 531q2-4 6.500-4.500" stroke="#fff" stroke-width="1.200" fill="none"/>
 <rect x="165.500" y="521.500" width="13" height="12" fill="#c4c4c4" stroke="#666"/><circle cx="174.500" cy="524.500" r="6" fill="#dcdcdc" stroke="#888" stroke-width="1.400"/><circle cx="174.500" cy="524.500" r="2.200" fill="#f8f8f8" stroke="#999"/><path d="M166 533l6-6 3 3 3-1v4z" fill="#6c6c6c"/><path d="M166 533l5-5" stroke="#eee" stroke-width="1.500"/>
 <!-- inner bevel -->
 <rect x="130.500" y="117.500" width="59" height="422" fill="none" stroke="#ccccd4" stroke-width="1"/>
</svg>
<!--TOOLBOX-END-->
<!--PALETTES-START--><!-- palettes -->
<svg style="left:806px;top:80px;z-index:3" width="218" height="658" viewBox="806 80 218 658">
<defs>
<linearGradient id="capg" x1="0" y1="0" x2="0" y2="1"><stop offset="0" stop-color="#a2a2bc"/><stop offset=".12" stop-color="#b2b2ca"/><stop offset=".45" stop-color="#c8c8da"/><stop offset=".75" stop-color="#e6e6ee"/><stop offset=".92" stop-color="#fcfcfe"/><stop offset="1" stop-color="#ffffff"/></linearGradient>
<linearGradient id="bmin" x1="0" y1="0" x2="1" y2="1"><stop offset="0" stop-color="#f4f4fc"/><stop offset=".4" stop-color="#d0d0e0"/><stop offset="1" stop-color="#8c8cac"/></linearGradient>
<linearGradient id="bcls" x1="0" y1="0" x2="1" y2="1"><stop offset="0" stop-color="#f4b4ac"/><stop offset=".5" stop-color="#e89088"/><stop offset="1" stop-color="#dc7c74"/></linearGradient>
<radialGradient id="arr" cx=".5" cy=".5" r=".5"><stop offset="0" stop-color="#ffffff"/><stop offset=".6" stop-color="#f0f4fc"/><stop offset="1" stop-color="#d4d8e8"/></radialGradient>
<linearGradient id="rg" x1="0" y1="0" x2="1" y2="0"><stop offset="0" stop-color="#000"/><stop offset="1" stop-color="#c82020"/></linearGradient>
<linearGradient id="gg" x1="0" y1="0" x2="1" y2="0"><stop offset="0" stop-color="#000"/><stop offset="1" stop-color="#28c028"/></linearGradient>
<linearGradient id="bg" x1="0" y1="0" x2="1" y2="0"><stop offset="0" stop-color="#000"/><stop offset="1" stop-color="#1818c8"/></linearGradient>
<linearGradient id="spec" x1="0" y1="0" x2="1" y2="0"><stop offset="0" stop-color="#e01818"/><stop offset=".08" stop-color="#f08018"/><stop offset=".17" stop-color="#f4e418"/><stop offset=".25" stop-color="#78c020"/><stop offset=".33" stop-color="#109038"/><stop offset=".42" stop-color="#10a090"/><stop offset=".51" stop-color="#30acec"/><stop offset=".59" stop-color="#2060c0"/><stop offset=".67" stop-color="#34107c"/><stop offset=".75" stop-color="#901080"/><stop offset=".85" stop-color="#e42070"/><stop offset=".93" stop-color="#f03050"/><stop offset="1" stop-color="#e02828"/></linearGradient>
<linearGradient id="specv" x1="0" y1="0" x2="0" y2="1"><stop offset="0" stop-color="#fff" stop-opacity=".95"/><stop offset=".5" stop-color="#fff" stop-opacity="0"/><stop offset=".6" stop-color="#000" stop-opacity="0"/><stop offset="1" stop-color="#000" stop-opacity=".95"/></linearGradient>
<linearGradient id="sbb" x1="0" y1="0" x2="0" y2="1"><stop offset="0" stop-color="#ffffff"/><stop offset="1" stop-color="#d8d8e4"/></linearGradient>
<pattern id="dith" width="2" height="2" patternUnits="userSpaceOnUse"><rect width="2" height="2" fill="#fff"/><rect width="1" height="1" fill="#dcdce4"/><rect x="1" y="1" width="1" height="1" fill="#dcdce4"/></pattern>
</defs>
<rect x="811" y="81" width="211" height="133" fill="#e0dfe4"/>
<rect x="811" y="82" width="210" height="16" fill="url(#capg)"/>
<rect x="811" y="81" width="211" height="1" fill="#6e6e86"/>
<rect x="810" y="81" width="1" height="133" fill="#62626c"/>
<rect x="813" y="98" width="207" height="16" fill="#c8c8cc"/>
<rect x="812" y="98" width="208" height="1" fill="#b4b4bc"/>
<rect x="811" y="82" width="1" height="131" fill="#f8f8fc"/>
<rect x="812" y="98" width="1" height="114" fill="#b0b0bc"/>
<rect x="1019" y="98" width="1" height="114" fill="#d0d0d8"/>
<rect x="1020" y="82" width="1" height="131" fill="#f8f8fc"/>
<rect x="1021" y="81" width="1" height="133" fill="#70707e"/>
<rect x="812" y="211" width="208" height="1" fill="#b4b4bc"/>
<rect x="811" y="212" width="210" height="1" fill="#f8f8fc"/>
<rect x="811" y="213" width="211" height="1" fill="#6e6e80"/>
<rect x="990.5" y="84.5" width="12" height="12" rx="2.5" fill="url(#bmin)" stroke="#7c7c98"/>
<rect x="993" y="92" width="7" height="2" fill="#1c1c30"/>
<rect x="1006.5" y="84.5" width="12" height="12" rx="1.5" fill="url(#bcls)" stroke="#e0a098"/>
<path d="M1009.5 87.5l6 6M1015.5 87.5l-6 6" stroke="#fff" stroke-width="1.8"/>
<circle cx="1010.5" cy="107" r="6.5" fill="url(#arr)"/>
<path d="M1009 103.5v7l3.500-3.500z" fill="#1c2c6c"/>
<path d="M879 114.5L886 100.5H915L928.5 114.5z" fill="#e0dfe4"/>
<path d="M886 106.5V100.5H915L928.5 114.5" fill="none" stroke="#111" stroke-width="1"/>
<rect x="813" y="114" width="206" height="1" fill="#111"/>
<path d="M817 115.0L818 100.5H879L892.5 115.0z" fill="#e0dfe4"/>
<path d="M813 114.5H817L818 100.5H879L892.5 114.5" fill="none" stroke="#111" stroke-width="1"/>
<text x="824" y="110.8" font-size="11" font-weight="bold" textLength="50.5" lengthAdjust="spacingAndGlyphs">Navigator</text>
<text x="893" y="110.8" font-size="11" textLength="16" lengthAdjust="spacingAndGlyphs">Info</text>
<rect x="869" y="121" width="94" height="70" fill="#3c0008"/><rect x="870" y="122" width="92" height="68" fill="#cc6c64"/><rect x="872" y="124" width="88" height="64" fill="#4c0010"/><rect x="873" y="125" width="86" height="62" fill="#1c0008"/><rect x="874" y="126" width="84" height="60" fill="#000"/>
<rect x="813" y="196" width="206" height="1" fill="#111"/>
<rect x="813" y="197" width="59" height="14" fill="#fff"/>
<text x="815" y="209" font-size="11" textLength="25.5" lengthAdjust="spacingAndGlyphs">100%</text>
<rect x="872" y="197" width="1" height="14" fill="#b0b0bc"/><rect x="873" y="197" width="1" height="14" fill="#fff"/>
<rect x="895" y="197" width="1" height="14" fill="#b0b0bc"/><rect x="896" y="197" width="1" height="14" fill="#fff"/>
<rect x="982" y="197" width="1" height="14" fill="#b0b0bc"/><rect x="983" y="197" width="1" height="14" fill="#fff"/>
<path d="M880 206.500h9M881.500 206l2-2.500 1.500 1.500 1-1 2 2z" fill="#f4f4f4" stroke="#222" stroke-width=".9"/>
<rect x="901" y="203" width="75" height="1" fill="#111"/>
<path d="M938.500 204.500l4.500 5h-9z" fill="#fff" stroke="#111"/>
<path d="M985 206.500h17.500M986 206l5-5.500 3.500 3.500 2.500-3 5 5z" fill="#f4f4f4" stroke="#222" stroke-width=".9"/>
<rect x="1004" y="197" width="1" height="14" fill="#111"/>
<rect x="1017" y="201" width="1.500" height="1.500" fill="#fff"/><rect x="1016" y="200" width="1.600" height="1.600" fill="#a0a0a8"/>
<rect x="1013" y="205" width="1.500" height="1.500" fill="#fff"/><rect x="1012" y="204" width="1.600" height="1.600" fill="#a0a0a8"/>
<rect x="1017" y="205" width="1.500" height="1.500" fill="#fff"/><rect x="1016" y="204" width="1.600" height="1.600" fill="#a0a0a8"/>
<rect x="1009" y="209" width="1.500" height="1.500" fill="#fff"/><rect x="1008" y="208" width="1.600" height="1.600" fill="#a0a0a8"/>
<rect x="1013" y="209" width="1.500" height="1.500" fill="#fff"/><rect x="1012" y="208" width="1.600" height="1.600" fill="#a0a0a8"/>
<rect x="1017" y="209" width="1.500" height="1.500" fill="#fff"/><rect x="1016" y="208" width="1.600" height="1.600" fill="#a0a0a8"/>
<rect x="811" y="214" width="211" height="133" fill="#e0dfe4"/>
<rect x="811" y="215" width="210" height="16" fill="url(#capg)"/>
<rect x="811" y="214" width="211" height="1" fill="#6e6e86"/>
<rect x="810" y="214" width="1" height="133" fill="#62626c"/>
<rect x="813" y="231" width="207" height="16" fill="#c8c8cc"/>
<rect x="812" y="231" width="208" height="1" fill="#b4b4bc"/>
<rect x="811" y="215" width="1" height="131" fill="#f8f8fc"/>
<rect x="812" y="231" width="1" height="114" fill="#b0b0bc"/>
<rect x="1019" y="231" width="1" height="114" fill="#d0d0d8"/>
<rect x="1020" y="215" width="1" height="131" fill="#f8f8fc"/>
<rect x="1021" y="214" width="1" height="133" fill="#70707e"/>
<rect x="812" y="344" width="208" height="1" fill="#b4b4bc"/>
<rect x="811" y="345" width="210" height="1" fill="#f8f8fc"/>
<rect x="811" y="346" width="211" height="1" fill="#6e6e80"/>
<rect x="990.5" y="217.5" width="12" height="12" rx="2.5" fill="url(#bmin)" stroke="#7c7c98"/>
<rect x="993" y="225" width="7" height="2" fill="#1c1c30"/>
<rect x="1006.5" y="217.5" width="12" height="12" rx="1.5" fill="url(#bcls)" stroke="#e0a098"/>
<path d="M1009.5 220.5l6 6M1015.5 220.5l-6 6" stroke="#fff" stroke-width="1.8"/>
<circle cx="1010.5" cy="240" r="6.5" fill="url(#arr)"/>
<path d="M1009 236.5v7l3.500-3.500z" fill="#1c2c6c"/>
<path d="M921 247.5L928 233.5H972L985.5 247.5z" fill="#e0dfe4"/>
<path d="M928 239.5V233.5H972L985.5 247.5" fill="none" stroke="#111" stroke-width="1"/>
<path d="M855 247.5L862 233.5H922L935.5 247.5z" fill="#e0dfe4"/>
<path d="M862 239.5V233.5H922L935.5 247.5" fill="none" stroke="#111" stroke-width="1"/>
<rect x="813" y="247" width="206" height="1" fill="#111"/>
<path d="M817 248.0L818 233.5H853L866.5 248.0z" fill="#e0dfe4"/>
<path d="M813 247.5H817L818 233.5H853L866.5 247.5" fill="none" stroke="#111" stroke-width="1"/>
<text x="824" y="243.8" font-size="11" font-weight="bold" textLength="26.5" lengthAdjust="spacingAndGlyphs">Color</text>
<text x="872" y="243.8" font-size="11" textLength="42" lengthAdjust="spacingAndGlyphs">Swatches</text>
<text x="938" y="243.8" font-size="11" textLength="27" lengthAdjust="spacingAndGlyphs">Styles</text>
<rect x="833.5" y="269.500" width="17" height="17" fill="#35403a" stroke="#1c1c1c"/>
<rect x="820.500" y="256.500" width="19" height="19" fill="#fff" stroke="#111"/><rect x="822" y="258" width="16" height="16" fill="#000"/>
<text x="854.500" y="264.5" font-size="11" textLength="6.5" lengthAdjust="spacingAndGlyphs">R</text>
<rect x="868" y="258" width="96" height="6" fill="url(#rg)"/><rect x="868" y="264" width="97" height="1" fill="#fff"/><rect x="964" y="258" width="1" height="6" fill="#fff"/>
<path d="M869.500 265.5l4.500 5h-9z" fill="#fff" stroke="#111"/>
<rect x="970.500" y="253.5" width="32" height="16" fill="#fff" stroke="#c4c4d0"/>
<text x="973" y="265" font-size="11">0</text>
<text x="854.500" y="286.5" font-size="11" textLength="6.5" lengthAdjust="spacingAndGlyphs">G</text>
<rect x="868" y="280" width="96" height="6" fill="url(#gg)"/><rect x="868" y="286" width="97" height="1" fill="#fff"/><rect x="964" y="280" width="1" height="6" fill="#fff"/>
<path d="M869.500 287.5l4.500 5h-9z" fill="#fff" stroke="#111"/>
<rect x="970.500" y="275.5" width="32" height="16" fill="#fff" stroke="#c4c4d0"/>
<text x="973" y="287" font-size="11">0</text>
<text x="854.500" y="308.5" font-size="11" textLength="6.5" lengthAdjust="spacingAndGlyphs">B</text>
<rect x="868" y="302" width="96" height="6" fill="url(#bg)"/><rect x="868" y="308" width="97" height="1" fill="#fff"/><rect x="964" y="302" width="1" height="6" fill="#fff"/>
<path d="M869.500 309.5l4.500 5h-9z" fill="#fff" stroke="#111"/>
<rect x="970.500" y="297.5" width="32" height="16" fill="#fff" stroke="#c4c4d0"/>
<text x="973" y="309" font-size="11">0</text>
<rect x="817.500" y="323.500" width="199" height="17" fill="url(#spec)" stroke="#000"/>
<rect x="818" y="324" width="198" height="16" fill="url(#specv)"/>
<rect x="1008" y="324" width="8" height="8" fill="#fff"/><rect x="1008" y="332" width="8" height="8" fill="#000"/>
<rect x="811" y="347" width="211" height="133" fill="#e0dfe4"/>
<rect x="811" y="348" width="210" height="16" fill="url(#capg)"/>
<rect x="811" y="347" width="211" height="1" fill="#6e6e86"/>
<rect x="810" y="347" width="1" height="133" fill="#62626c"/>
<rect x="813" y="364" width="207" height="16" fill="#c8c8cc"/>
<rect x="812" y="364" width="208" height="1" fill="#b4b4bc"/>
<rect x="811" y="348" width="1" height="131" fill="#f8f8fc"/>
<rect x="812" y="364" width="1" height="114" fill="#b0b0bc"/>
<rect x="1019" y="364" width="1" height="114" fill="#d0d0d8"/>
<rect x="1020" y="348" width="1" height="131" fill="#f8f8fc"/>
<rect x="1021" y="347" width="1" height="133" fill="#70707e"/>
<rect x="812" y="477" width="208" height="1" fill="#b4b4bc"/>
<rect x="811" y="478" width="210" height="1" fill="#f8f8fc"/>
<rect x="811" y="479" width="211" height="1" fill="#6e6e80"/>
<rect x="990.5" y="350.5" width="12" height="12" rx="2.5" fill="url(#bmin)" stroke="#7c7c98"/>
<rect x="993" y="358" width="7" height="2" fill="#1c1c30"/>
<rect x="1006.5" y="350.5" width="12" height="12" rx="1.5" fill="url(#bcls)" stroke="#e0a098"/>
<path d="M1009.5 353.5l6 6M1015.5 353.5l-6 6" stroke="#fff" stroke-width="1.8"/>
<circle cx="1010.5" cy="373" r="6.5" fill="url(#arr)"/>
<path d="M1009 369.5v7l3.500-3.500z" fill="#1c2c6c"/>
<path d="M909 380.5L916 366.5H990L1003.5 380.5z" fill="#e0dfe4"/>
<path d="M916 366.5H990L1003.5 380.5" fill="none" stroke="#111" stroke-width="1"/>
<path d="M861 380.5L868 366.5H915L928.5 380.5z" fill="#e0dfe4"/>
<path d="M868 366.5H915L928.5 380.5" fill="none" stroke="#111" stroke-width="1"/>
<rect x="813" y="380" width="206" height="1" fill="#111"/>
<path d="M817 381.0L818 366.5H867L880.5 381.0z" fill="#e0dfe4"/>
<path d="M813 380.5H817L818 366.5H867L880.5 380.5" fill="none" stroke="#111" stroke-width="1"/>
<text x="824" y="376.8" font-size="11" font-weight="bold" textLength="38" lengthAdjust="spacingAndGlyphs">History</text>
<text x="876" y="376.8" font-size="11" textLength="31" lengthAdjust="spacingAndGlyphs">Actions</text>
<text x="925.5" y="376.8" font-size="11" textLength="54.5" lengthAdjust="spacingAndGlyphs">Tool Presets</text>
<rect x="813" y="383" width="206" height="1" fill="#111"/>
<rect x="836" y="384" width="168" height="18" fill="#e0dfe4"/>
<rect x="813" y="401" width="191" height="1" fill="#fafafc"/>
<rect x="815.500" y="384.5" width="17" height="15" fill="#e2e1e6" stroke="#fafafc"/><path d="M815.500 400V384.5h17" fill="none" stroke="#c0c0c8"/>
<ellipse cx="852" cy="391.5" rx="7" ry="6.500" fill="none" stroke="#222" stroke-width="1.200" stroke-dasharray="3.600 1.300"/>
<text x="869.500" y="394" font-size="11" textLength="74.5" lengthAdjust="spacingAndGlyphs">Elliptical Marquee</text>
<rect x="836" y="402" width="168" height="20" fill="#e0dfe4"/>
<rect x="813" y="421" width="191" height="1" fill="#fafafc"/>
<rect x="815.500" y="402.5" width="17" height="17" fill="#e2e1e6" stroke="#fafafc"/><path d="M815.500 420V402.5h17" fill="none" stroke="#c0c0c8"/>
<ellipse cx="852" cy="411.5" rx="7" ry="6.500" fill="none" stroke="#222" stroke-width="1.200" stroke-dasharray="3.600 1.300"/>
<text x="869.500" y="414" font-size="11" textLength="74.5" lengthAdjust="spacingAndGlyphs">Elliptical Marquee</text>
<rect x="836" y="422" width="168" height="20" fill="#e0dfe4"/>
<rect x="813" y="441" width="191" height="1" fill="#fafafc"/>
<rect x="815.500" y="422.5" width="17" height="17" fill="#e2e1e6" stroke="#fafafc"/><path d="M815.500 440V422.5h17" fill="none" stroke="#c0c0c8"/>
<ellipse cx="852" cy="431.5" rx="7" ry="6.500" fill="none" stroke="#222" stroke-width="1.200" stroke-dasharray="3.600 1.300"/>
<text x="869.500" y="434" font-size="11" textLength="74.5" lengthAdjust="spacingAndGlyphs">Elliptical Marquee</text>
<rect x="836" y="442" width="168" height="20" fill="#b6b6c6"/>
<rect x="815.500" y="442.5" width="17" height="17" fill="#e2e1e6" stroke="#fafafc"/><path d="M815.500 460V442.5h17" fill="none" stroke="#c0c0c8"/>
<ellipse cx="852" cy="451.5" rx="7" ry="6.500" fill="none" stroke="#222" stroke-width="1.200" stroke-dasharray="3.600 1.300"/>
<text x="869.500" y="454" font-size="11" font-weight="bold" textLength="93" lengthAdjust="spacingAndGlyphs">Elliptical Marquee</text>
<rect x="835" y="384" width="1" height="78" fill="#111"/>
<path d="M833.500 446.500h5l3.500 5-3.500 5h-5z" fill="#fff" stroke="#111"/>
<rect x="1004" y="384" width="15" height="78" fill="url(#dith)"/>
<rect x="1004.500" y="384.500" width="14" height="16" rx="1.500" fill="url(#sbb)" stroke="#c0c0d0"/><path d="M1008 395l3.500-3.500 3.500 3.500" fill="none" stroke="#333" stroke-width="1.800"/>
<rect x="1004.500" y="437.500" width="14" height="7" rx="1.500" fill="url(#sbb)" stroke="#c0c0d0"/>
<rect x="1004.500" y="445.500" width="14" height="16" rx="1.500" fill="url(#sbb)" stroke="#c0c0d0"/><path d="M1008 451.500l3.500 3.500 3.500-3.500" fill="none" stroke="#333" stroke-width="1.800"/>
<rect x="813" y="462" width="206" height="1" fill="#111"/>
<rect x="1004" y="463" width="1" height="14" fill="#111"/>
<rect x="1017" y="466" width="1.500" height="1.500" fill="#fff"/><rect x="1016" y="465" width="1.600" height="1.600" fill="#a0a0a8"/>
<rect x="1013" y="470" width="1.500" height="1.500" fill="#fff"/><rect x="1012" y="469" width="1.600" height="1.600" fill="#a0a0a8"/>
<rect x="1017" y="470" width="1.500" height="1.500" fill="#fff"/><rect x="1016" y="469" width="1.600" height="1.600" fill="#a0a0a8"/>
<rect x="1009" y="474" width="1.500" height="1.500" fill="#fff"/><rect x="1008" y="473" width="1.600" height="1.600" fill="#a0a0a8"/>
<rect x="1013" y="474" width="1.500" height="1.500" fill="#fff"/><rect x="1012" y="473" width="1.600" height="1.600" fill="#a0a0a8"/>
<rect x="1017" y="474" width="1.500" height="1.500" fill="#fff"/><rect x="1016" y="473" width="1.600" height="1.600" fill="#a0a0a8"/>
<rect x="926.500" y="465.500" width="10" height="9" fill="#dcdce0" stroke="#555"/><rect x="926" y="465" width="11" height="2" fill="#666"/><rect x="928.500" y="469.500" width="6" height="3" fill="#eee" stroke="#666" stroke-width=".8"/>
<rect x="955.500" y="466.500" width="13" height="8" fill="#f0f0f0" stroke="#444"/><rect x="963" y="465" width="3" height="2" fill="#333"/><circle cx="962.500" cy="470.500" r="2.600" fill="#ddd" stroke="#333"/><rect x="956" y="467" width="3" height="7" fill="#fff"/>
<path d="M988.500 468.500h6v6.500h-6zM987 467.500h9M990 465.500h3" fill="#eee" stroke="#333"/><path d="M990.500 469v5M992.500 469v5" stroke="#555" stroke-width=".8"/>
<rect x="811" y="480" width="211" height="252" fill="#e0dfe4"/>
<rect x="811" y="481" width="210" height="16" fill="url(#capg)"/>
<rect x="811" y="480" width="211" height="1" fill="#6e6e86"/>
<rect x="810" y="480" width="1" height="252" fill="#62626c"/>
<rect x="813" y="497" width="207" height="16" fill="#c8c8cc"/>
<rect x="812" y="497" width="208" height="1" fill="#b4b4bc"/>
<rect x="811" y="481" width="1" height="250" fill="#f8f8fc"/>
<rect x="812" y="497" width="1" height="233" fill="#b0b0bc"/>
<rect x="1019" y="497" width="1" height="233" fill="#d0d0d8"/>
<rect x="1020" y="481" width="1" height="250" fill="#f8f8fc"/>
<rect x="1021" y="480" width="1" height="252" fill="#70707e"/>
<rect x="812" y="729" width="208" height="1" fill="#b4b4bc"/>
<rect x="811" y="730" width="210" height="1" fill="#f8f8fc"/>
<rect x="811" y="731" width="211" height="1" fill="#6e6e80"/>
<rect x="990.5" y="483.5" width="12" height="12" rx="2.5" fill="url(#bmin)" stroke="#7c7c98"/>
<rect x="993" y="491" width="7" height="2" fill="#1c1c30"/>
<rect x="1006.5" y="483.5" width="12" height="12" rx="1.5" fill="url(#bcls)" stroke="#e0a098"/>
<path d="M1009.5 486.5l6 6M1015.5 486.5l-6 6" stroke="#fff" stroke-width="1.8"/>
<circle cx="1010.5" cy="506" r="6.5" fill="url(#arr)"/>
<path d="M1009 502.5v7l3.500-3.500z" fill="#1c2c6c"/>
<path d="M925 513.5L932 499.5H972L985.5 513.5z" fill="#e0dfe4"/>
<path d="M932 505.5V499.5H972L985.5 513.5" fill="none" stroke="#111" stroke-width="1"/>
<path d="M865 513.5L872 499.5H925L938.5 513.5z" fill="#e0dfe4"/>
<path d="M872 505.5V499.5H925L938.5 513.5" fill="none" stroke="#111" stroke-width="1"/>
<rect x="813" y="513" width="206" height="1" fill="#111"/>
<path d="M817 514.0L818 499.5H863L876.5 514.0z" fill="#e0dfe4"/>
<path d="M813 513.5H817L818 499.5H863L876.5 513.5" fill="none" stroke="#111" stroke-width="1"/>
<text x="824" y="509.8" font-size="11" font-weight="bold" textLength="36.5" lengthAdjust="spacingAndGlyphs">Layers</text>
<text x="881" y="509.8" font-size="11" textLength="37.5" lengthAdjust="spacingAndGlyphs">Channels</text>
<text x="942" y="509.8" font-size="11" textLength="24.5" lengthAdjust="spacingAndGlyphs">Paths</text>
<rect x="817.500" y="519.500" width="100" height="14" fill="#f4f4f6" stroke="#d4d4dc"/>
<rect x="901.500" y="520.500" width="15" height="12" rx="2" fill="#ececf0" stroke="#d4d4dc"/><path d="M905.500 524.500l3.500 3.500 3.500-3.500" fill="none" stroke="#bcbcc4" stroke-width="1.800"/>
<text x="820.500" y="531" font-size="11" fill="#a8a8ac" textLength="31" lengthAdjust="spacingAndGlyphs">Normal</text>
<text x="926" y="531" font-size="11" fill="#a8a8ac" textLength="36" lengthAdjust="spacingAndGlyphs">Opacity:</text>
<rect x="968.500" y="519.500" width="46" height="14" fill="#e8e8e4" stroke="#d0d0d4"/>
<text x="970.500" y="531" font-size="11" fill="#a8a8ac" textLength="25.5" lengthAdjust="spacingAndGlyphs">100%</text><path d="M1004 523l3.500 3.500-3.500 3.500" fill="none" stroke="#bcbcc4" stroke-width="1.500"/>
<rect x="813" y="538" width="206" height="1" fill="#b8b8c4"/><rect x="813" y="539" width="206" height="1" fill="#fafafc"/>
<text x="816.500" y="554.500" font-size="11" fill="#a8a8ac" textLength="23" lengthAdjust="spacingAndGlyphs">Lock:</text>
<rect x="849.500" y="545.500" width="10" height="10" fill="#f4f4f4" stroke="#c0c0c4"/><rect x="850" y="546" width="5" height="5" fill="#dcdcdc"/><rect x="855" y="551" width="5" height="5" fill="#dcdcdc"/>
<path d="M879 545l-6 6" stroke="#b0b0b4" stroke-width="1.600"/><path d="M873 550.500q-3 1-4 5q3 0 5.500-3.500z" fill="#c4c4c8" stroke="#a4a4a8" stroke-width=".8"/>
<path d="M890.500 545.500v10M885.500 550.500h10" stroke="#a0a0a4" stroke-width="1.200"/><path d="M890.500 544l-2 2.500h4zM890.500 557l-2-2.500h4zM884 550.500l2.500-2v4zM897 550.500l-2.500-2v4z" fill="#a0a0a4"/>
<rect x="904.500" y="550.500" width="9" height="6" fill="#b4b4b8" stroke="#a0a0a4"/><path d="M906.500 550.500v-2q0-2.500 2.500-2.500t2.500 2.500v2" fill="none" stroke="#a8a8ac" stroke-width="1.300"/>
<text x="949.500" y="554.500" font-size="11" fill="#a8a8ac" textLength="13.500" lengthAdjust="spacingAndGlyphs">Fill:</text>
<rect x="968.500" y="543.500" width="46" height="14" fill="#e8e8e4" stroke="#d0d0d4"/>
<text x="970.500" y="555" font-size="11" fill="#a8a8ac" textLength="25.5" lengthAdjust="spacingAndGlyphs">100%</text><path d="M1004 547l3.500 3.500-3.500 3.500" fill="none" stroke="#bcbcc4" stroke-width="1.500"/>
<rect x="813" y="563" width="206" height="1" fill="#111"/>
<rect x="813" y="594" width="191" height="120" fill="#e2e1e6"/>
<rect x="858" y="564" width="146" height="29" fill="#b6b6c6"/>
<rect x="813" y="564" width="44" height="29" fill="#e4e3e8"/>
<rect x="817.500" y="570.500" width="15" height="14" fill="#e0dfe4" stroke="#fafafc"/><path d="M817.500 585v-14.500h15" fill="none" stroke="#c0c0c8"/>
<rect x="839.500" y="570.500" width="15" height="14" fill="#e0dfe4" stroke="#fafafc"/><path d="M839.500 585v-14.500h15" fill="none" stroke="#c0c0c8"/>
<rect x="835" y="564" width="1" height="29" fill="#b4b4bc"/>
<rect x="857" y="564" width="2" height="29" fill="#111"/>
<path d="M819.500 577.500q2.500-4.500 6-4.500t6 4.500q-2.500 4-6 4t-6-4z" fill="#d8d8d8" stroke="#555" stroke-width=".8"/><ellipse cx="825.500" cy="577.500" rx="3.200" ry="3" fill="#111"/><circle cx="824.500" cy="576.500" r=".9" fill="#fff"/><path d="M819.500 576.500q2.500-4 6-4t6 4" fill="none" stroke="#111" stroke-width="1.600"/>
<path d="M853 572.500l-5.500 6" stroke="#444" stroke-width="1.600"/><path d="M848 577.500q-1.500 1-3 3.500q-1.500 2-3.500 2.500q3.500 1 6-1q2.500-2 2.500-3.500z" fill="#888" stroke="#222" stroke-width=".9"/>
<rect x="859" y="564" width="34" height="1" fill="#b6b6c6"/><rect x="859" y="565" width="34" height="28" fill="#000"/><rect x="860.500" y="566.500" width="31" height="24" fill="none" stroke="#c8c8d0" stroke-width="1"/>
<text x="896.500" y="580" font-size="10" font-style="italic" textLength="53.500" lengthAdjust="spacingAndGlyphs">Background</text>
<rect x="992.500" y="576.500" width="8" height="6" fill="#fff" stroke="#222"/><path d="M994.500 576.500v-1.500q0-2 2-2t2 2v1.500" fill="none" stroke="#222" stroke-width="1.200"/>
<rect x="813" y="593" width="191" height="1" fill="#111"/>
<rect x="1004" y="564" width="15" height="150" fill="#f0f0f4"/><rect x="1004" y="564" width="15" height="150" fill="url(#dith)"/>
<rect x="1004.500" y="565.500" width="14" height="15" rx="1.500" fill="#f6f6f8" stroke="#e0e0e8"/><path d="M1008 575.500l3.500-3.500 3.500 3.500" fill="none" stroke="#d0d0d8" stroke-width="1.800"/>
<rect x="1004.500" y="697.500" width="14" height="15" rx="1.500" fill="#f6f6f8" stroke="#e0e0e8"/><path d="M1008 703.500l3.500 3.500 3.500-3.500" fill="none" stroke="#d0d0d8" stroke-width="1.800"/>
<rect x="813" y="714" width="206" height="1" fill="#111"/>
<rect x="1004" y="715" width="1" height="14" fill="#111"/>
<rect x="1017" y="719" width="1.500" height="1.500" fill="#fff"/><rect x="1016" y="718" width="1.600" height="1.600" fill="#a0a0a8"/>
<rect x="1013" y="723" width="1.500" height="1.500" fill="#fff"/><rect x="1012" y="722" width="1.600" height="1.600" fill="#a0a0a8"/>
<rect x="1017" y="723" width="1.500" height="1.500" fill="#fff"/><rect x="1016" y="722" width="1.600" height="1.600" fill="#a0a0a8"/>
<rect x="1009" y="727" width="1.500" height="1.500" fill="#fff"/><rect x="1008" y="726" width="1.600" height="1.600" fill="#a0a0a8"/>
<rect x="1013" y="727" width="1.500" height="1.500" fill="#fff"/><rect x="1012" y="726" width="1.600" height="1.600" fill="#a0a0a8"/>
<rect x="1017" y="727" width="1.500" height="1.500" fill="#fff"/><rect x="1016" y="726" width="1.600" height="1.600" fill="#a0a0a8"/>
<circle cx="847" cy="721.500" r="6" fill="#a4a4a8" stroke="#909094"/><text x="844.500" y="726" font-size="10" font-style="italic" font-weight="bold" fill="#f4f4f4" style="font-family:'Liberation Serif',serif">f</text><path d="M854 725h3l-1.500 2z" fill="#b0b0b4"/>
<rect x="868.500" y="715.500" width="13" height="12" fill="#d4d4d8" stroke="#b4b4b8"/><circle cx="875" cy="721.500" r="3.500" fill="#fff" stroke="#c0c0c4"/>
<path d="M897.500 716.500h4l1 1.500h6v8h-11z" fill="#e8e8ec" stroke="#777"/><path d="M898 726.500h11v-8" fill="none" stroke="#222" stroke-width="1.200"/>
<circle cx="932.500" cy="721.500" r="5.500" fill="#fff" stroke="#222" stroke-width="1.200"/><path d="M936.400 717.600a5.500 5.500 0 0 0-7.800 7.800z" fill="#222"/><path d="M939 726h4l-2 2.500z" fill="#111"/>
<rect x="958.500" y="717.500" width="8" height="8" fill="#fff" stroke="#333"/><path d="M959.500 726.500h8v-8" fill="none" stroke="#111" stroke-width="1.200"/><rect x="959.500" y="721.500" width="3" height="3" fill="#fff" stroke="#111"/>
<path d="M988.500 719.500h6v7h-6zM987 718.500h9M990 716.500h3" fill="#f0f0f0" stroke="#b4b4b8"/>
</svg>
<!--PALETTES-END-->
<!-- status bar -->
<div class="abs" style="left:0;top:715px;width:1024px;height:23px;background:linear-gradient(#808080 0,#808080 1px,#ffffff 1px,#ffffff 2px,#e2e1e6 2px,#e0dfe4 4px,#e0dfe4 17px,#f4f4f8 18px,#ffffff 19px,#c8c8d0 19px,#d0d0d8 20px,#fcfcfe 20px,#fcfcfe 22px,#8c8ca4 22px)"></div>
<div class="abs" style="left:1px;top:717px;width:47px;height:17px;background:#fff;border:1px solid #000"></div>
<svg style="left:0;top:715px" width="810" height="23" viewBox="0 715 810 23">
 <text x="10.500" y="728.500" font-size="11" textLength="24.5" lengthAdjust="spacingAndGlyphs">100%</text>
 <rect x="50" y="717" width="22" height="17" fill="#d8d8dc"/><rect x="48" y="717" width="2" height="17" fill="#fafafc"/><rect x="72" y="717" width="1" height="17" fill="#fafafc"/>
 <path d="M57.500 719.500h3.500l2.500 2.500v5.500h-6z" fill="#c8c8c8" stroke="#111"/><path d="M61 719.500v2.500h2.500" fill="#fff" stroke="#111" stroke-width=".8"/><path d="M59.500 727.500v2M61.500 727.500v2" stroke="#111"/><path d="M53.500 729.500h13" stroke="#111"/>
 <text x="75" y="728.500" font-size="11" textLength="65.5" lengthAdjust="spacingAndGlyphs">Doc: 493K/0K</text>
 <rect x="273" y="717" width="1" height="16" fill="#f8f8fa"/><rect x="272" y="717" width="1" height="16" fill="#c4c4cc"/>
 <path d="M280 719.500v10l5.500-5z" fill="#000"/>
 <text x="295" y="728.500" font-size="11" textLength="418.5" lengthAdjust="spacingAndGlyphs">Draw elliptical selection or move selection outline.  Use Shift, Alt, and Ctrl for additional options.</text>
</svg>
<!--STATUS-END-->
<!-- taskbar -->
<style>
#tb{left:0;top:735px;width:1024px;height:33px;background:linear-gradient(#f4f4f8 0,#f4f4f8 2px,#8e8ea6 2px,#8e8ea6 3px,#fdfdff 3px,#fdfdff 5px,#c6c6d8 7px,#c9c9da 12px,#d6d6e2 20px,#e6e6ee 27px,#f2f2f6 31px,#9c9cb4 32px,#9c9cb4 33px)}
.tk{position:absolute;top:741px;height:24px;border-radius:3px;border:1px solid #b4b4c8;border-top-color:#fafafe;border-left-color:#f0f0f8;border-bottom-color:#9c9cb2;border-right-color:#a8a8bc;background:linear-gradient(#fbfbfd 0,#f2f2f8 6px,#e2e2ec 14px,#d0d0de 21px,#c4c4d4 100%)}
.tk.on{border-color:#545c68;background:linear-gradient(#5e6672 0,#6a727e 3px,#767e88 10px,#868e96 100%);box-shadow:inset 1px 1px 2px #444c58}
</style>
<div id="tb" class="abs"></div>
<!-- start button -->
<svg style="left:0;top:738px" width="110" height="30" viewBox="0 738 110 30">
 <defs>
  <linearGradient id="sg" x1="0" y1="0" x2="0" y2="1"><stop offset="0" stop-color="#3c9c3c"/><stop offset=".08" stop-color="#7cc86c"/><stop offset=".2" stop-color="#4cac44"/><stop offset=".5" stop-color="#3a9a34"/><stop offset=".85" stop-color="#2e8a2c"/><stop offset="1" stop-color="#1e6a20"/></linearGradient>
  <linearGradient id="sg2" x1="0" y1="0" x2="1" y2="0"><stop offset="0" stop-color="#2e8a2c" stop-opacity="0"/><stop offset=".8" stop-color="#2e8a2c" stop-opacity="0"/><stop offset="1" stop-color="#0c5412" stop-opacity=".9"/></linearGradient>
 </defs>
 <path d="M0 738h92q11 6 11 19q0 6-3 11h-100z" fill="url(#sg)"/>
 <path d="M0 738h92q11 6 11 19q0 6-3 11h-100z" fill="url(#sg2)"/>
 <path d="M0 739.500h92" stroke="#a0dc90" stroke-width="1.500" opacity=".8"/>
 <!-- windows flag -->
 <g transform="translate(19.500 752.500) scale(1.180) translate(-18.500 -752.500)">
 <path d="M12.500 746.500q3-2 6.500-.5l-1.500 5.500q-3.500-1.500-6.500.5z" fill="#e0682c"/>
 <path d="M20.500 746.500q3.500 1.500 6.500-.3l-1.500 5.500q-3 1.800-6.500.3z" fill="#7cc23c"/>
 <path d="M10.700 753.500q3-2 6.500-.5l-1.500 5.500q-3.500-1.500-6.500.5z" fill="#4c7ce0"/>
 <path d="M18.700 753.500q3.500 1.500 6.500-.3l-1.500 5.500q-3 1.800-6.500.3z" fill="#f0c030"/>
 </g>
 <text x="35.500" y="759" font-size="17.500" font-weight="bold" font-style="italic" fill="#1c5c1c" opacity=".6" textLength="42" lengthAdjust="spacingAndGlyphs">Inicio</text>
 <text x="34.500" y="758" font-size="17.500" font-weight="bold" font-style="italic" fill="#fffff0" textLength="42" lengthAdjust="spacingAndGlyphs">Inicio</text>
</svg>
<!-- quick launch -->
<svg style="left:108px;top:738px" width="120" height="30" viewBox="108 738 120 30">
 <g fill="#8c8ca8"><rect x="113" y="746" width="2" height="2"/><rect x="113" y="750" width="2" height="2"/><rect x="113" y="754" width="2" height="2"/><rect x="113" y="758" width="2" height="2"/><rect x="113" y="762" width="2" height="2"/>
 <rect x="214" y="746" width="2" height="2"/><rect x="214" y="750" width="2" height="2"/><rect x="214" y="754" width="2" height="2"/><rect x="214" y="758" width="2" height="2"/><rect x="214" y="762" width="2" height="2"/></g>
 <g fill="#fff"><rect x="115" y="744" width="2" height="2"/><rect x="115" y="748" width="2" height="2"/><rect x="115" y="752" width="2" height="2"/><rect x="115" y="756" width="2" height="2"/><rect x="115" y="760" width="2" height="2"/>
 <rect x="216" y="744" width="2" height="2"/><rect x="216" y="748" width="2" height="2"/><rect x="216" y="752" width="2" height="2"/><rect x="216" y="756" width="2" height="2"/><rect x="216" y="760" width="2" height="2"/></g>
 <!-- IE -->
 <defs><radialGradient id="ieg" cx=".4" cy=".35" r=".7"><stop offset="0" stop-color="#6cc0f8"/><stop offset=".6" stop-color="#2c8ce0"/><stop offset="1" stop-color="#1c64c0"/></radialGradient>
 <radialGradient id="lkg" cx=".45" cy=".4" r=".6"><stop offset="0" stop-color="#ffffff"/><stop offset=".6" stop-color="#c0c4d4"/><stop offset="1" stop-color="#6c7090"/></radialGradient></defs>
 <circle cx="133" cy="753.500" r="6.800" fill="url(#ieg)"/>
 <ellipse cx="133" cy="752.500" rx="9" ry="3.600" fill="none" stroke="#48a4ec" stroke-width="1.500" transform="rotate(-30 133 752.500)"/>
 <path d="M129.500 754h7.500q0-4-3.800-4t-3.900 4q.2 3.800 3.900 3.800q2.600 0 3.500-2" fill="none" stroke="#f4faff" stroke-width="1.800"/>
 <!-- link icon -->
 <ellipse cx="156.500" cy="752.500" rx="7.500" ry="5" fill="url(#lkg)" stroke="#50547c" stroke-width="1.300" transform="rotate(-28 156.500 752.500)"/>
 <ellipse cx="155" cy="754" rx="4.500" ry="2.600" fill="none" stroke="#585c80" stroke-width="1.200" transform="rotate(-28 155 754)"/>
 <path d="M155 752l5-2" stroke="#40446c" stroke-width="1.200"/>
 <!-- outlook-ish icon -->
 <rect x="172.500" y="746.500" width="13" height="13" rx="2" fill="#f0f6fc" stroke="#2c68b8" stroke-width="1.600"/>
 <path d="M181.500 750.500h-4.500v6h5" fill="none" stroke="#2c68b8" stroke-width="1.700"/><path d="M178 753.500h4" stroke="#1c2c4c" stroke-width="1.200"/>
 <path d="M183 750l4-2.500" stroke="#d04848" stroke-width="1.600"/>
 <path d="M198.500 745.500l3 2.500-3 2.500M203 745.500l3 2.500-3 2.500" fill="none" stroke="#111" stroke-width="1.700"/>
</svg>
<!-- task buttons -->
<div class="tk" style="left:226px;width:140px"></div>
<div class="tk" style="left:368px;width:140px"></div>
<div class="tk" style="left:510px;width:140px"></div>
<div class="tk on" style="left:652px;width:141px"></div>
<div class="tk" style="left:795px;width:141px"></div>
<svg style="left:226px;top:738px" width="798" height="30" viewBox="226 738 798 30">
 <!-- mozilla -->
 <rect x="234.500" y="745.500" width="14" height="14" rx="2" fill="#b82c14" stroke="#2c2c3c"/>
 <path d="M236.500 750q2-4 7-3.500q4 1 4 5q0 4-3 6q-1-3-3-2q-1 2-3 1q-1-3-2-6.500z" fill="#e05c34"/>
 <path d="M238 749.500q2 0 3 2M241 748q2 1 2 4M244 750q1 2 0 4M239 753q2 1 4 0" fill="none" stroke="#701408" stroke-width=".9"/>
 <circle cx="243.500" cy="750" r=".9" fill="#200804"/>
 <path d="M235 755.500l4 4.500h-4z" fill="#f8f8ff" stroke="#2c2c3c" stroke-width=".8"/>
 <text x="253" y="757" font-size="11" font-weight="bold" fill="#ec8470">3</text>
 <text x="263" y="757" font-size="11" fill="#1c1c2c" textLength="31.500" lengthAdjust="spacingAndGlyphs">Mozilla</text>
 <path d="M355.500 751.500h6l-3 3.500z" fill="#30303c"/>
 <!-- emule -->
 <path d="M377 759q-1-8 3-11l2-3 2 3 4-2q2 4 3 10q-2 3-7 3.500q-5 .5-7-.5z" fill="#b8641c"/><path d="M378.500 756q3-3 6 0q1 3-2.500 3.500q-3.500 0-3.500-3.500z" fill="#f4e4cc"/><circle cx="386" cy="752" r="1" fill="#201008"/>
 <text x="395.500" y="757" font-size="11" fill="#1c1c2c" textLength="91.500" lengthAdjust="spacingAndGlyphs">eMule v0.45b pH…</text>
 <!-- media player -->
 <circle cx="525.500" cy="753" r="7.200" fill="#f08c24"/><path d="M525.500 745.800a7.200 7.200 0 0 1 7.200 7.200h-7.200z" fill="#48a83c"/><path d="M525.500 760.200a7.200 7.200 0 0 1-7.200-7.200h7.200z" fill="#3868c8"/>
 <circle cx="525.500" cy="753" r="5" fill="#f4f4fa"/><circle cx="525.500" cy="753" r="7.200" fill="none" stroke="#5c5c70" stroke-width=".8"/>
 <path d="M523.500 749.500l5.500 3.500-5.500 3.500z" fill="#181828"/>
 <text x="537" y="757" font-size="11" fill="#1c1c2c" textLength="90" lengthAdjust="spacingAndGlyphs">Reproductor de …</text>
 <!-- photoshop (active) -->
 <rect x="662.500" y="746.500" width="13" height="14" fill="#3058a8" stroke="#1c2c58"/>
 <ellipse cx="671" cy="752.500" rx="6.500" ry="7.500" fill="#e8ecf4" stroke="#181820" stroke-width="1.500"/>
 <circle cx="672" cy="753" r="3.200" fill="#0c0c14"/><path d="M671 751l3.500 2-3.500 2z" fill="#f0a830"/>
 <text x="681" y="757" font-size="11" fill="#fff" textLength="83.500" lengthAdjust="spacingAndGlyphs">Adobe Photoshop</text>
 <!-- paint -->
 <path d="M807 749h10l-1.500 11h-7z" fill="#e8d8b8" stroke="#8c6c3c" stroke-width=".8"/>
 <path d="M808.500 745.500l2.500 9" stroke="#3c9c3c" stroke-width="2"/><path d="M812 745v9" stroke="#d4a020" stroke-width="2"/><path d="M816 745.500l-2 9" stroke="#c83c2c" stroke-width="2"/>
 <text x="822.500" y="757" font-size="11" fill="#1c1c2c" textLength="91.500" lengthAdjust="spacingAndGlyphs">circularlasso - Paint</text>
 <!-- tray -->
 <defs><linearGradient id="tg" x1="0" y1="0" x2="0" y2="1"><stop offset="0" stop-color="#ffffff"/><stop offset=".35" stop-color="#fafafc"/><stop offset=".6" stop-color="#e2e2ec"/><stop offset=".85" stop-color="#c4c4d8"/><stop offset="1" stop-color="#b0b0c8"/></linearGradient>
 <radialGradient id="cg" cx=".4" cy=".35" r=".7"><stop offset="0" stop-color="#d8d8e4"/><stop offset=".6" stop-color="#a0a0b4"/><stop offset="1" stop-color="#70708c"/></radialGradient></defs>
 <rect x="950" y="739" width="74" height="29" fill="url(#tg)"/>
 <rect x="949" y="739" width="1" height="29" fill="#787890"/><rect x="950" y="739" width="1" height="29" fill="#fff"/>
 <circle cx="948.500" cy="753" r="8.300" fill="url(#cg)" stroke="#54546c" stroke-width="1.200"/>
 <path d="M951 749l-4 4 4 4" fill="none" stroke="#fff" stroke-width="2.200"/>
 <rect x="966.500" y="745.500" width="8" height="7" rx="1" fill="#8cc4f4" stroke="#4c84c8"/><path d="M968 755.500h6" stroke="#c4d4ec" stroke-width="1.600"/><rect x="960.500" y="749.500" width="8" height="7" rx="1" fill="#9cd0f8" stroke="#4c84c8"/><rect x="962" y="751" width="3" height="2" fill="#e4f4ff"/><rect x="968" y="747" width="3" height="2" fill="#e4f4ff"/>
 <path d="M962 759.500h6" stroke="#d4dcf0" stroke-width="1.800"/>
 <text x="982.500" y="757" font-size="11" fill="#101018" textLength="27.500" lengthAdjust="spacingAndGlyphs">23:14</text>
</svg>
<!--TASKBAR-END-->
</body>
</html>
